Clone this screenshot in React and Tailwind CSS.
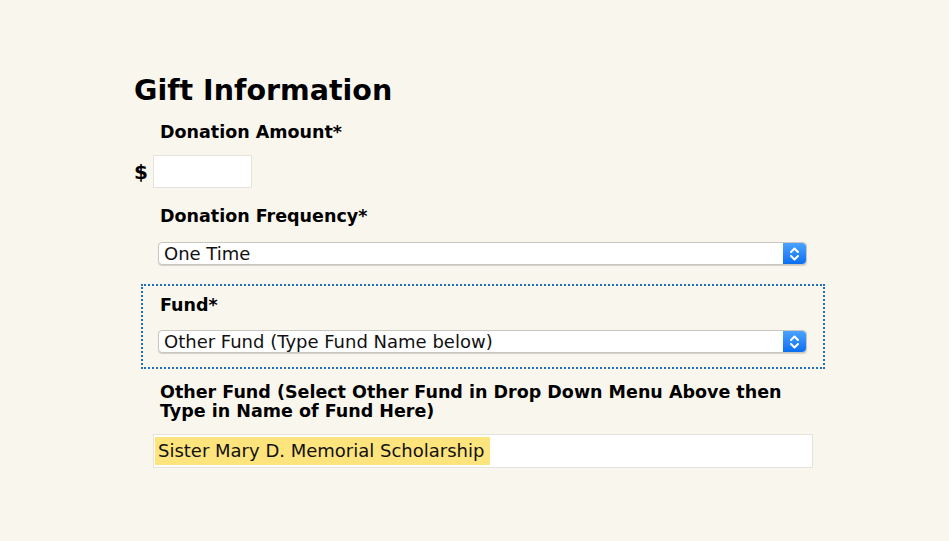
import React from 'react';

const Stepper = () => (
  <div className="w-[23px] h-full bg-gradient-to-b from-[#4aa3ff] to-[#0a6ef0] rounded-r-[4px] flex items-center justify-center">
    <svg width="11" height="16" viewBox="0 0 11 16" fill="none" stroke="white" strokeWidth="2" strokeLinecap="round" strokeLinejoin="round">
      <path d="M2 6 L5.5 2.5 L9 6" />
      <path d="M2 10 L5.5 13.5 L9 10" />
    </svg>
  </div>
);

const Select = ({ value }) => (
  <div className="w-[649px] h-[23px] flex bg-white border border-[#c9c6c0] rounded-[4px] shadow-[0_1px_1px_rgba(0,0,0,0.15)]">
    <div className="flex-1 pl-[5px] text-[18px] leading-[21px] text-[#111]">{value}</div>
    <Stepper />
  </div>
);

export default function App() {
  return (
    <div className="min-h-screen w-full bg-[#f9f6ee] font-['DejaVu_Sans',Verdana,sans-serif] text-black">
      <div className="pl-[134px] pt-[74px]">
        <h1 className="text-[28.5px] leading-[34px] font-bold">Gift Information</h1>
        <div className="mt-[14px] ml-[26px] text-[17.5px] leading-[20px] font-bold">Donation Amount*</div>
        <div className="mt-[13px] flex items-center">
          <span className="text-[20px] font-bold w-[19px]">$</span>
          <div className="w-[99px] h-[33px] bg-white border border-[#e6e3dc]"></div>
        </div>
        <div className="mt-[18px] ml-[26px] text-[17.5px] leading-[20px] font-bold">Donation Frequency*</div>
        <div className="mt-[16px] ml-[24px]">
          <Select value="One Time" />
        </div>
      </div>
      <div className="ml-[141px] mt-[19px] w-[684px] h-[85px] border-2 border-dotted border-[#1f6fc3] pt-[9px]">
        <div className="ml-[17px] text-[17.5px] leading-[20px] font-bold">Fund*</div>
        <div className="mt-[15px] ml-[15px]">
          <Select value="Other Fund (Type Fund Name below)" />
        </div>
      </div>
      <div className="pl-[134px]">
        <div className="mt-[14px] ml-[26px] w-[660px] text-[17.5px] leading-[19px] font-bold">
          Other Fund (Select Other Fund in Drop Down Menu Above then Type in Name of Fund Here)
        </div>
        <div className="mt-[13px] ml-[19px] w-[660px] h-[34px] bg-white border border-[#e6e3dc] flex items-center pl-[1px]">
          <span className="bg-[#fde47c] h-[28px] leading-[28px] pl-[3px] pr-[6px] text-[18px] text-[#111]">Sister Mary D. Memorial Scholarship</span>
        </div>
      </div>
    </div>
  );
}
